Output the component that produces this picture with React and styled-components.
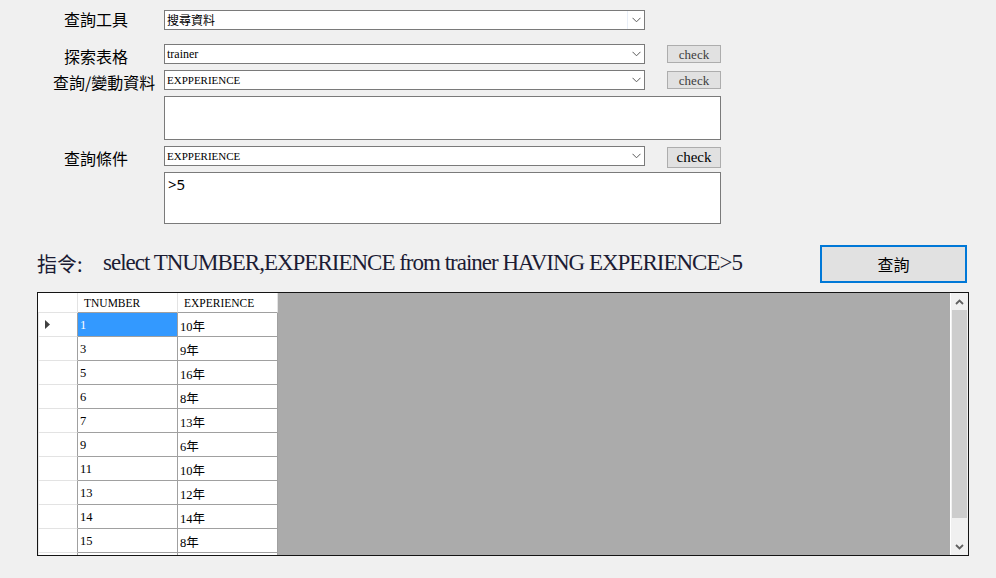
import React from "react";
import styled, { createGlobalStyle } from "styled-components";

const Global = createGlobalStyle`
  html, body { margin: 0; padding: 0; background: #f0f0f0; }
  body { width: 996px; height: 578px; overflow: hidden; font-family: "Noto Sans CJK TC", "Noto Sans", sans-serif; }
`;

const Page = styled.div`
  display: flex;
  flex-direction: column;
  padding-top: 10px;
`;

const Row = styled.div`
  display: flex;
  align-items: center;
  height: ${(p) => p.$h || 20}px;
  margin-top: ${(p) => p.$mt || 0}px;
`;

const LabelCell = styled.div`
  width: 164px;
  flex: none;
  display: flex;
  align-items: center;
`;

const Label = styled.span`
  padding-left: ${(p) => p.$indent}px;
  font-family: "Noto Sans CJK TC", sans-serif;
  font-size: 16px;
  line-height: 20px;
  color: #000;
  position: relative;
  top: ${(p) => p.$dy || 0}px;
  white-space: nowrap;
`;

const Combo = styled.div`
  box-sizing: border-box;
  width: 481px;
  height: 20px;
  border: 1px solid #7a7a7a;
  background: #fff;
  display: flex;
  align-items: center;
`;

const ComboText = styled.span`
  flex: 1;
  padding-left: 2px;
  font-family: "Liberation Serif", "Noto Sans CJK TC", serif;
  font-size: ${(p) => p.$fs || 12}px;
  color: #000;
  white-space: nowrap;
  overflow: hidden;
`;

const ArrowBox = styled.div`
  width: 16px;
  height: 18px;
  display: flex;
  align-items: center;
  justify-content: center;
  border-left: 1px solid ${(p) => (p.$focused ? "#e8eef7" : "transparent")};
`;

const CheckButton = styled.div`
  box-sizing: border-box;
  margin-left: 22px;
  width: 54px;
  height: ${(p) => p.$h || 18}px;
  align-self: flex-start;
  margin-top: ${(p) => p.$mt || 1}px;
  background: #e1e1e1;
  border: 1px solid #adadad;
  display: flex;
  align-items: center;
  justify-content: center;
  font-family: "Liberation Serif", serif;
  font-size: ${(p) => p.$fs || 13}px;
  color: ${(p) => p.$color || "#3c3c3c"};
  line-height: 1;
`;

const TextArea = styled.div`
  box-sizing: border-box;
  margin-left: 164px;
  margin-top: 6px;
  width: 557px;
  height: ${(p) => p.$h}px;
  border: 1px solid #7a7a7a;
  background: #fff;
  padding: 2px 3px;
  font-family: "Noto Sans", sans-serif;
  font-size: 15px;
  line-height: 18px;
  color: #000;
`;

const CommandRow = styled.div`
  display: flex;
  align-items: center;
  justify-content: space-between;
  margin-top: 21px;
  padding: 0 29px 0 37px;
  height: 38px;
`;

const Command = styled.div`
  display: flex;
  align-items: center;
  white-space: nowrap;
  color: #1c1c34;
  position: relative;
  top: -1px;
`;

const CmdLead = styled.span`
  width: 66px;
  flex: none;
  font-family: "Noto Sans CJK TC", serif;
  font-size: 20px;
`;

const CmdText = styled.span`
  font-family: "Liberation Serif", serif;
  font-size: 23px;
  letter-spacing: -1px;
`;

const QueryButton = styled.div`
  box-sizing: border-box;
  width: 147px;
  height: 38px;
  border: 2px solid #0078d7;
  background: #e1e1e1;
  display: flex;
  align-items: center;
  justify-content: center;
  font-family: "Noto Sans CJK TC", sans-serif;
  font-size: 16px;
  color: #000;
`;

const Grid = styled.div`
  box-sizing: border-box;
  margin: 9px 0 0 37px;
  width: 932px;
  height: 264px;
  border: 1px solid #141414;
  background: #ababab;
  display: flex;
  overflow: hidden;
`;

const Table = styled.div`
  flex: 1;
  display: grid;
  grid-template-columns: 40px 100px 100px;
  grid-auto-rows: 24px;
  grid-template-rows: 20px;
  align-content: start;
  overflow: hidden;
`;

const HeadCell = styled.div`
  box-sizing: border-box;
  background: #fff;
  border-right: 1px solid #e3e3e3;
  border-bottom: 1px solid ${(p) => (p.$corner ? "#e3e3e3" : "#a0a0a0")};
  font-family: "Liberation Serif", serif;
  font-size: 11.5px;
  padding-left: 6px;
  display: flex;
  align-items: center;
  color: #000;
`;

const RowHead = styled.div`
  box-sizing: border-box;
  background: #fff;
  border-right: 1px solid #a0a0a0;
  border-bottom: 1px solid #e3e3e3;
  border-left: 1px solid #e8e8e8;
  display: flex;
  align-items: center;
  padding-left: 6px;
`;

const Cell = styled.div`
  box-sizing: border-box;
  background: ${(p) => (p.$sel ? "#3399ff" : "#fff")};
  color: ${(p) => (p.$sel ? "#fff" : "#000")};
  border-right: 1px solid #a0a0a0;
  border-bottom: 1px solid #a0a0a0;
  padding: 2px 0 0 2px;
  display: flex;
  align-items: center;
  font-family: "Liberation Serif", "Noto Sans CJK TC", serif;
  font-size: 12.5px;
`;

const ScrollBar = styled.div`
  width: 17px;
  flex: none;
  background: #f0f0f0;
  border-left: 1px solid #fff;
  display: flex;
  flex-direction: column;
`;

const ScrollArrow = styled.div`
  height: 17px;
  display: flex;
  align-items: center;
  justify-content: center;
`;

const Thumb = styled.div`
  height: 208px;
  margin: 0 1px;
  background: #cdcdcd;
`;

const Track = styled.div`
  flex: 1;
`;

const Chevron = () => (
  <svg width="9" height="6" viewBox="0 0 9 6">
    <polyline points="0.5,0.8 4.5,4.8 8.5,0.8" fill="none" stroke="#5a5a5a" strokeWidth="1" />
  </svg>
);

const ScrollChevron = ({ up }) => (
  <svg width="9" height="6" viewBox="0 0 9 6">
    <polyline
      points={up ? "1,5 4.5,1.5 8,5" : "1,1 4.5,4.5 8,1"}
      fill="none"
      stroke="#606060"
      strokeWidth="1.8"
    />
  </svg>
);

const ComboBox = ({ text, fs, focused }) => (
  <Combo>
    <ComboText $fs={fs}>{text}</ComboText>
    <ArrowBox $focused={focused}>
      <Chevron />
    </ArrowBox>
  </Combo>
);

const rows = [
  ["1", "10年"],
  ["3", "9年"],
  ["5", "16年"],
  ["6", "8年"],
  ["7", "13年"],
  ["9", "6年"],
  ["11", "10年"],
  ["13", "12年"],
  ["14", "14年"],
  ["15", "8年"],
  ["", ""],
];

export default function App() {
  return (
    <>
      <Global />
      <Page>
        <Row>
          <LabelCell>
            <Label $indent={64} $dy={-1}>查詢工具</Label>
          </LabelCell>
          <ComboBox text="搜尋資料" focused />
        </Row>
        <Row $mt={14}>
          <LabelCell>
            <Label $indent={64} $dy={2}>探索表格</Label>
          </LabelCell>
          <ComboBox text="trainer" />
          <CheckButton>check</CheckButton>
        </Row>
        <Row $mt={6}>
          <LabelCell>
            <Label $indent={53} $dy={2}>查詢/變動資料</Label>
          </LabelCell>
          <ComboBox text="EXPPERIENCE" fs={11} />
          <CheckButton $mt={0}>check</CheckButton>
        </Row>
        <TextArea $h={44} />
        <Row $mt={6}>
          <LabelCell>
            <Label $indent={64} $dy={2}>查詢條件</Label>
          </LabelCell>
          <ComboBox text="EXPPERIENCE" fs={11} />
          <CheckButton $h={21} $fs={15} $color="#000">check</CheckButton>
        </Row>
        <TextArea $h={52}>&gt;5</TextArea>
        <CommandRow>
          <Command>
            <CmdLead>指令:</CmdLead>
            <CmdText>select TNUMBER,EXPERIENCE from trainer HAVING EXPERIENCE&gt;5</CmdText>
          </Command>
          <QueryButton>查詢</QueryButton>
        </CommandRow>
        <Grid>
          <Table>
            <HeadCell $corner />
            <HeadCell>TNUMBER</HeadCell>
            <HeadCell>EXPERIENCE</HeadCell>
            {rows.map(([n, e], i) => (
              <React.Fragment key={i}>
                <RowHead>
                  {i === 0 && (
                    <svg width="5" height="9" viewBox="0 0 5 9">
                      <polygon points="0,0 5,4.5 0,9" fill="#404040" />
                    </svg>
                  )}
                </RowHead>
                <Cell $sel={i === 0}>{n}</Cell>
                <Cell>{e}</Cell>
              </React.Fragment>
            ))}
          </Table>
          <ScrollBar>
            <ScrollArrow>
              <ScrollChevron up />
            </ScrollArrow>
            <Thumb />
            <Track />
            <ScrollArrow>
              <ScrollChevron />
            </ScrollArrow>
          </ScrollBar>
        </Grid>
      </Page>
    </>
  );
}
